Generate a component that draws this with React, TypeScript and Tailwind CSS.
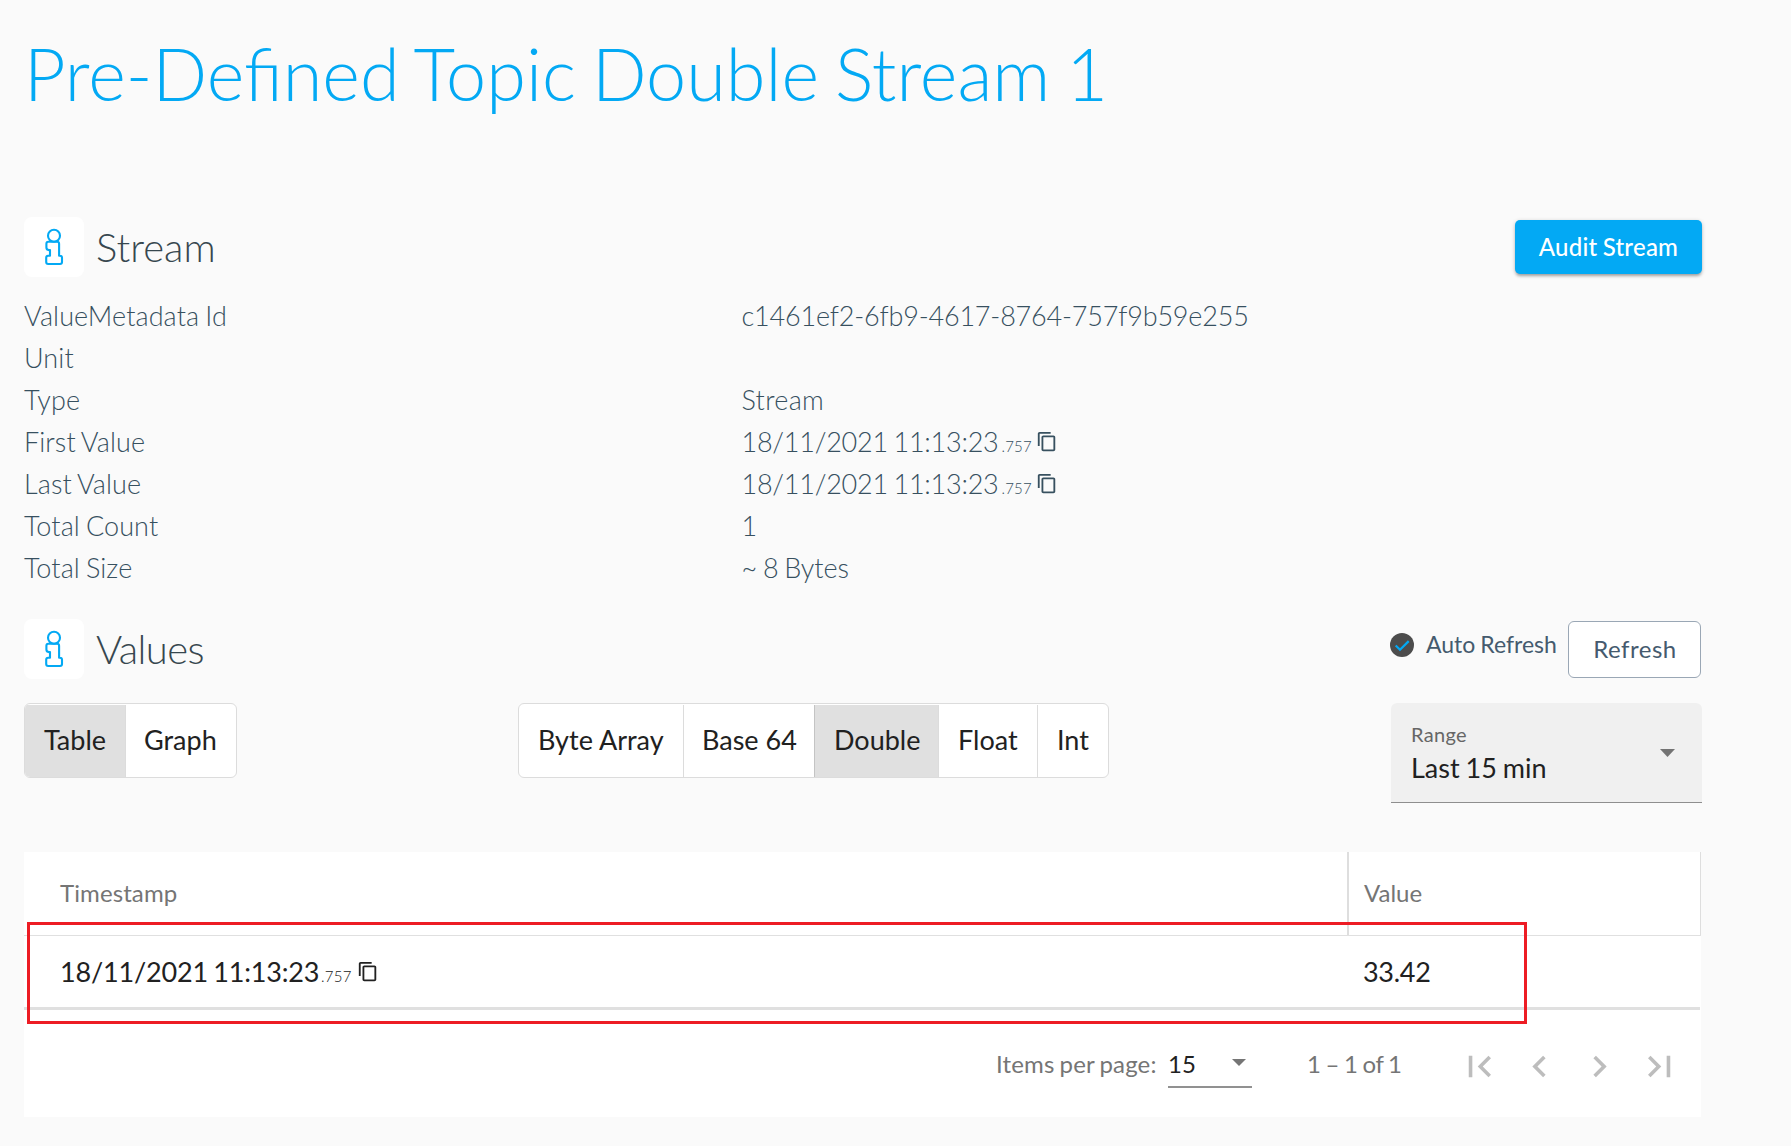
import type { ReactNode } from 'react';

function InfoIcon() {
  return (
    <div className="size-[60px] rounded-lg bg-white">
      <svg viewBox="0 0 60 60" className="size-full" fill="none" stroke="#03a9f4" strokeWidth="2.1" strokeLinejoin="round">
        <circle cx="30" cy="18.8" r="6" />
        <path d="M24.3 24.8h8.900q1.900 0 1.900 2v11.900h.8q2.100 0 2.100 2v4.300q0 2-2 2H24.200q-2 0-2-2v-4.300q0-2 2-2H26v-5.600h-1q-2.600 0-2.600-2.500v-3.800q0-2 1.900-2z" />
      </svg>
    </div>
  );
}

function SectionTitle({ children }: { children: ReactNode }) {
  return (
    <div className="flex items-center gap-3">
      <InfoIcon />
      <h2 className="text-[40px] leading-[60px] font-light text-[#37474f]">{children}</h2>
    </div>
  );
}

function CopyIcon() {
  return (
    <svg viewBox="0 0 24 24" preserveAspectRatio="none" className="mb-px h-[21px] w-[22px]" fill="currentColor">
      <path d="M16 1H4c-1.100 0-2 .9-2 2v14h2V3h12V1zm3 4H8c-1.100 0-2 .9-2 2v14c0 1.100.9 2 2 2h11c1.100 0 2-.9 2-2V7c0-1.100-.9-2-2-2zm0 16H8V7h11v14z" />
    </svg>
  );
}

function StreamTime() {
  return (
    <span className="flex items-center">
      <span className="w-[260px] tracking-[-0.24px]">18/11/2021 11:13:23</span>
      <span className="w-[34px] pt-[9px] text-[15px] leading-[33px] tracking-[0.2px]">.757</span>
      <CopyIcon />
    </span>
  );
}

const rows: [string, ReactNode][] = [
  ['ValueMetadata Id', <span className="tracking-[-0.19px]">c1461ef2-6fb9-4617-8764-757f9b59e255</span>],
  ['Unit', ''],
  ['Type', <span className="tracking-[0.3px]">Stream</span>],
  ['First Value', <StreamTime />],
  ['Last Value', <StreamTime />],
  ['Total Count', '1'],
  ['Total Size', <span className="tracking-[-0.1px]">~ 8 Bytes</span>],
];

function ToggleGroup({ items }: { items: { label: string; width: string; active?: boolean }[] }) {
  return (
    <div className="flex h-[75px] overflow-hidden rounded-md border border-[#dcdcdc] bg-white pt-px text-[27px] [word-spacing:-1px] text-[#212121]">
      {items.map((item, i) => (
        <button
          key={item.label}
          className={`${item.width} ${item.active ? 'bg-[#e0e0e0]' : ''} ${
            i > 0 ? (item.active ? 'border-l border-[#c4c4c4]' : 'border-l border-[#dcdcdc]') : ''
          } flex items-center justify-start whitespace-nowrap pb-px`}
        >
          {item.label}
        </button>
      ))}
    </div>
  );
}

const pagerPaths = [
  'M18.41 16.59L13.82 12l4.59-4.59L17 6l-6 6 6 6zM6 6h2v12H6z',
  'M15.41 7.41L14 6l-6 6 6 6 1.41-1.41L10.83 12z',
  'M10 6L8.59 7.41 13.17 12l-4.58 4.59L10 18l6-6z',
  'M5.59 7.41L10.18 12l-4.59 4.59L7 18l6-6-6-6zM16 6h2v12h-2z',
];

export default function App() {
  return (
    <div className="h-[1146px] overflow-hidden bg-[#fafafa] pl-6 font-['Lato',sans-serif]">
      <div className="w-[1678px]">
        <h1 className="pt-7 text-[72px] leading-[90px] font-light [word-spacing:-3.6px] text-[#03a9f4]">
          Pre-Defined Topic Double Stream 1
        </h1>

        <div className="mt-[99px] flex items-center justify-between">
          <SectionTitle>Stream</SectionTitle>
          <button className="h-[54px] w-[187px] rounded-[5px] bg-[#03a9f4] pb-px text-[24px] font-medium tracking-[0.25px] [word-spacing:-1.2px] text-white shadow-[0_3px_3px_-1px_rgba(0,0,0,0.25),0_1px_4px_rgba(0,0,0,0.2)]">
            Audit Stream
          </button>
        </div>

        <dl className="mt-[18px] text-[27px] leading-[42px] font-light [word-spacing:-1.4px] text-[#37505f]">
          {rows.map(([label, value]) => (
            <div key={label} className="grid h-[42px] grid-cols-[717.5px_1fr]">
              <dt className="tracking-[0.1px]">{label}</dt>
              <dd>{value}</dd>
            </div>
          ))}
        </dl>

        <div className="mt-[30px] flex h-[60px] justify-between">
          <SectionTitle>
            <span className="tracking-[-0.6px]">Values</span>
          </SectionTitle>
          <div className="flex items-start pt-[2px] text-[#455a6e]">
            <label className="mt-[10px] flex h-7 items-center gap-3">
              <svg viewBox="0 0 24 24" className="size-6">
                <circle cx="12" cy="12" r="12" fill="#4c4c4c" />
                <path d="M5.700 12.500l4.300 4.300 8.700-8.700" fill="none" stroke="#03a9f4" strokeWidth="2.2" />
              </svg>
              <span className="w-[142px] pb-[3px] text-[23px] leading-7 [word-spacing:-1px]">Auto Refresh</span>
            </label>
            <button className="mr-px h-[57px] w-[133px] rounded-md border border-[#9aa7b5] bg-white pb-[2px] pl-px text-[24px] tracking-[0.5px]">
              Refresh
            </button>
          </div>
        </div>

        <div className="mt-6 flex h-[100px] items-start">
          <ToggleGroup
            items={[
              { label: 'Table', width: 'w-[100px] pl-[19px]', active: true },
              { label: 'Graph', width: 'w-[111px] pl-[18px]' },
            ]}
          />
          <div className="ml-[281px]">
            <ToggleGroup
              items={[
                { label: 'Byte Array', width: 'w-[164px] pl-[19px]' },
                { label: 'Base 64', width: 'w-[131px] pl-[18px]' },
                { label: 'Double', width: 'w-[124px] pl-[19px]', active: true },
                { label: 'Float', width: 'w-[99px] pl-[19px]' },
                { label: 'Int', width: 'w-[71px] pl-[19px]' },
              ]}
            />
          </div>
          <div className="ml-auto flex h-[100px] w-[311px] items-center rounded-t-md border-b border-[#8e8e8e] bg-[#f0f0f0] pr-[27px] pl-[20px]">
            <div className="grow pb-[3px]">
              <div className="text-[20px] leading-[32px] tracking-[0.3px] text-[#666]">Range</div>
              <div className="text-[27px] leading-[35px] [word-spacing:-1px] text-[#212121]">Last 15 min</div>
            </div>
            <svg viewBox="0 0 15 8" className="h-2 w-[15px]">
              <path d="M0 0h15L7.500 8z" fill="#737373" />
            </svg>
          </div>
        </div>

        <div className="relative mt-[49px] w-[1677px] bg-white">
          <div className="flex h-[84px] border-b border-[#e0e0e0] text-[24px] leading-[82px] text-[#757575]">
            <div className="w-[1323px] pl-9 tracking-[0.1px]">Timestamp</div>
            <div className="grow border-r border-l-2 border-r-[#dedede] border-l-[#dedede] pl-[15px]">Value</div>
          </div>
          <div className="mr-px flex h-[74px] border-b-[3px] border-[#e0e0e0] text-[27px] leading-[71px] text-[#212121]">
            <div className="flex w-[1339px] items-center pl-9">
              <span className="w-[261px] tracking-[-0.18px] [word-spacing:-1.4px]">18/11/2021 11:13:23</span>
              <span className="w-9 pt-[9px] text-[15px] leading-[33px] font-light tracking-[0.3px]">.757</span>
              <CopyIcon />
            </div>
            <div className="tracking-[-0.3px]">33.42</div>
          </div>
          <div className="flex h-[107px] items-center justify-end pr-3 text-[24px] text-[#757575]">
            <span className="w-[173px] pl-px tracking-[0.15px] [word-spacing:-1.2px]">Items per page:</span>
            <div className="flex h-[49px] w-[84px] items-center justify-between border-b-2 border-[#919191] pr-[6px] text-[#212121]">
              <span className="pt-[2px]">15</span>
              <svg viewBox="0 0 14 7" className="h-[7px] w-[14px]">
                <path d="M0 0h14L7 7z" fill="#757575" />
              </svg>
            </div>
            <span className="ml-[55px] w-[142px] tracking-[-0.3px] [word-spacing:-1px]">1 – 1 of 1</span>
            {pagerPaths.map((d) => (
              <button key={d} className="mt-[5px] flex w-[60px] justify-center">
                <svg viewBox="0 0 24 24" className="size-[43px]" fill="#bdbdbd">
                  <path d={d} />
                </svg>
              </button>
            ))}
          </div>
          <div className="absolute top-[70px] left-[3px] h-[102px] w-[1500px] border-[3px] border-[#ed1c24]" />
        </div>
      </div>
    </div>
  );
}
